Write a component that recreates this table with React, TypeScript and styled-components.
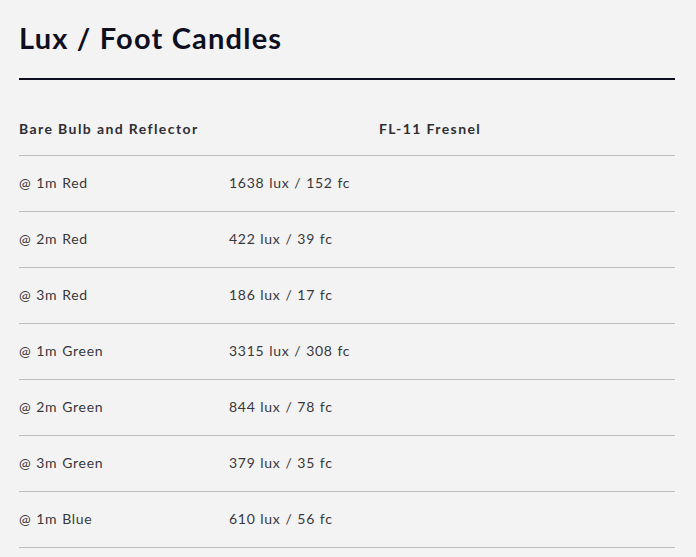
import React from "react";
import styled, { createGlobalStyle } from "styled-components";

const Global = createGlobalStyle`
  html, body { margin: 0; padding: 0; background: #f3f3f3; }
  body { font-family: "Lato", "Liberation Sans", sans-serif; }
`;

const Page = styled.div`
  padding: 19px 21px 0 19px;
`;

const Title = styled.h2`
  margin: 0;
  padding-top: 1px;
  font-size: 29px;
  line-height: 36px;
  font-weight: 700;
  letter-spacing: 1.2px;
  color: #0e0f20;
  padding-bottom: 22px;
  border-bottom: 2px solid #0e0f20;
`;

const Table = styled.div`
  margin-top: 20px;
  display: grid;
  grid-template-columns: 210px 150px 1fr;
`;

const Row = styled.div`
  display: contents;
`;

const Cell = styled.div<{ $head?: boolean; $span?: number }>`
  height: 56px;
  box-sizing: border-box;
  display: flex;
  align-items: center;
  border-bottom: 1px solid #bdbdbd;
  font-size: 14px;
  font-weight: ${(p) => (p.$head ? 700 : 400)};
  letter-spacing: ${(p) => (p.$head ? "1.4px" : "0.7px")};
  word-spacing: ${(p) => (p.$head ? "0" : "0.6px")};
  color: ${(p) => (p.$head ? "#2e2e33" : "#38383c")};
  padding-top: ${(p) => (p.$head ? "1px" : "0")};
  padding-bottom: ${(p) => (p.$head ? "0" : "2px")};
  ${(p) => (p.$span ? `grid-column: span ${p.$span};` : "")}
`;

const rows: [string, string][] = [
  ["@ 1m Red", "1638 lux / 152 fc"],
  ["@ 2m Red", "422 lux / 39 fc"],
  ["@ 3m Red", "186 lux / 17 fc"],
  ["@ 1m Green", "3315 lux / 308 fc"],
  ["@ 2m Green", "844 lux / 78 fc"],
  ["@ 3m Green", "379 lux / 35 fc"],
  ["@ 1m Blue", "610 lux / 56 fc"],
];

export default function App() {
  return (
    <>
      <Global />
      <Page>
        <Title>Lux / Foot Candles</Title>
        <Table>
          <Row>
            <Cell $head $span={2}>Bare Bulb and Reflector</Cell>
            <Cell $head>FL-11 Fresnel</Cell>
          </Row>
          {rows.map(([a, b]) => (
            <Row key={a}>
              <Cell>{a}</Cell>
              <Cell>{b}</Cell>
              <Cell />
            </Row>
          ))}
        </Table>
      </Page>
    </>
  );
}
